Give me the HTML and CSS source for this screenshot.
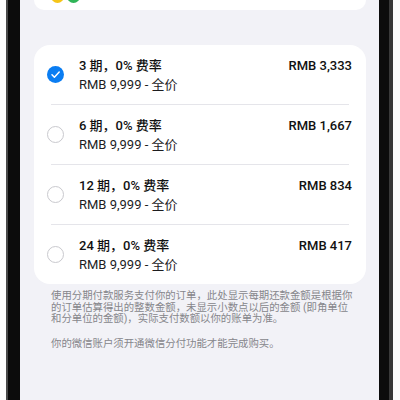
FILE: index.html
```html
<!DOCTYPE html>
<html lang="zh-CN">
<head>
  <meta charset="UTF-8">
  <title>分期付款</title>
  <link rel="stylesheet" href="styles.css">
</head>
<body>
  <div class="phone">
    <div class="bezel bezel-left"></div>
    <div class="screen">
      <div class="top-card">
        <span class="dot yellow"></span>
        <span class="dot green"></span>
      </div>

      <div class="plan-card">
        <div class="plan">
          <span class="radio checked">
            <svg viewBox="0 0 17 17" width="17" height="17"><path d="M5 8.8l2.4 2.4L12.2 6" fill="none" stroke="#fff" stroke-width="1.5" stroke-linecap="round" stroke-linejoin="round"/></svg>
          </span>
          <div class="plan-text">
            <div class="plan-title">3 期，0% 费率</div>
            <div class="plan-sub">RMB 9,999 - 全价</div>
          </div>
          <div class="plan-amount">RMB 3,333</div>
        </div>
        <div class="divider"></div>
        <div class="plan">
          <span class="radio"></span>
          <div class="plan-text">
            <div class="plan-title">6 期，0% 费率</div>
            <div class="plan-sub">RMB 9,999 - 全价</div>
          </div>
          <div class="plan-amount">RMB 1,667</div>
        </div>
        <div class="divider"></div>
        <div class="plan">
          <span class="radio"></span>
          <div class="plan-text">
            <div class="plan-title">12 期，0% 费率</div>
            <div class="plan-sub">RMB 9,999 - 全价</div>
          </div>
          <div class="plan-amount">RMB 834</div>
        </div>
        <div class="divider"></div>
        <div class="plan">
          <span class="radio"></span>
          <div class="plan-text">
            <div class="plan-title">24 期，0% 费率</div>
            <div class="plan-sub">RMB 9,999 - 全价</div>
          </div>
          <div class="plan-amount">RMB 417</div>
        </div>
      </div>

      <div class="notes">
        <p>使用分期付款服务支付你的订单，此处显示每期还款金额是根据你的订单估算得出的整数金额，未显示小数点以后的金额 (即角单位和分单位的金额)，实际支付数额以你的账单为准。</p>
        <p>你的微信账户须开通微信分付功能才能完成购买。</p>
      </div>
    </div>
    <div class="bezel bezel-right"></div>
  </div>
</body>
</html>
```

FILE: styles.css
```css
html, body {
  margin: 0;
  height: 100%;
}
body {
  background: #fff;
  font-family: Roboto, "Noto Sans CJK SC", sans-serif;
  color: #1d1d1f;
  overflow: hidden;
}
.phone {
  display: flex;
  height: 400px;
  margin-left: 6px;
}
.bezel {
  background: #0c0c0c;
}
.bezel-left {
  width: 12px;
  border-left: 2px solid #4a4a4a;
}
.bezel-right {
  width: 10px;
  border-right: 4px solid #3a3a3a;
}
.screen {
  width: 359px;
  background: #f2f2f7;
  padding: 0 13px 0 14px;
  box-sizing: border-box;
}
.top-card {
  height: 10px;
  background: #fff;
  border-radius: 0 0 16px 16px;
  display: flex;
  gap: 3px;
  padding-left: 17px;
  overflow: hidden;
}
.dot {
  width: 13px;
  height: 13px;
  border-radius: 50%;
  margin-top: -10px;
}
.yellow { background: #f5c518; }
.green { background: #2fb457; }

.plan-card {
  margin-top: 35px;
  background: #fff;
  border-radius: 16px;
}
.plan {
  display: flex;
  align-items: center;
  height: 59px;
  padding: 0 14px 0 13px;
}
.radio {
  width: 17px;
  height: 17px;
  box-sizing: border-box;
  border: 1px solid #c9c9ce;
  border-radius: 50%;
  flex-shrink: 0;
  margin-right: 15px;
}
.radio.checked {
  border: none;
  background: #0a7df2;
}
.radio svg {
  display: block;
}
.plan-text {
  flex: 1;
  align-self: flex-start;
  padding-top: 11px;
}
.plan-title {
  font-size: 13px;
  line-height: 19px;
  font-weight: 500;
  color: #111;
}
.plan-sub {
  font-size: 13px;
  line-height: 19px;
}
.plan-amount {
  align-self: flex-start;
  padding-top: 11px;
  font-size: 13px;
  line-height: 19px;
  font-weight: 500;
  color: #111;
}
.divider {
  height: 1px;
  background: #e5e5ea;
  margin: 0 17px;
}

.notes {
  padding: 6px 17px 0;
  width: 304px;
  color: #86868b;
  font-size: 10.4px;
  line-height: 11.6px;
}
.notes p {
  margin: 0 0 13px;
}
```
